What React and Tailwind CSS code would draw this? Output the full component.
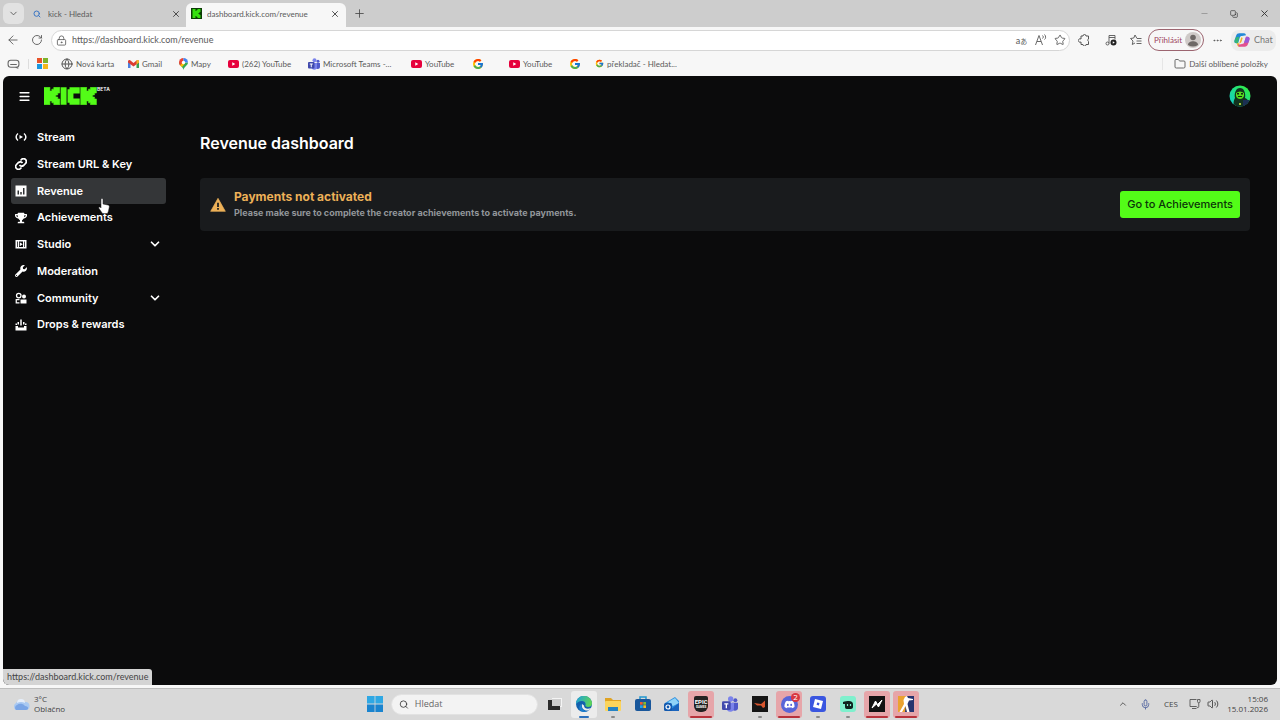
import React from "react";
import {
  ChevronDown, ChevronUp, X, Plus, Minus, ArrowLeft, RotateCw, Star, Ellipsis,
  Globe, Folder, Search, Menu, Mic, Volume2, LockKeyhole, Copy,
} from "lucide-react";
import { FcGoogle } from "react-icons/fc";
import { FaTrophy, FaWrench, FaDiscord } from "react-icons/fa";

const K_PATH = "M0 0H3V2H4V1H5V0H8V3H7V4H6V5H7V6H8V9H5V8H4V7H3V9H0Z";

function KickLogo() {
  return (
    <svg viewBox="0 0 27 9" className="h-[18px] w-[53px]" role="img" aria-label="Kick" fill="#53fc18">
      <path d={K_PATH} stroke="#53fc18" strokeWidth="0.300" />
      <path d="M8.500 0H11.500V9H8.500Z" />
      <path d="M13 0H18.200V3.200H15V5.800H18.200V9H13V8H12V1H13Z" />
      <path d={K_PATH} transform="translate(18.700 0)" stroke="#53fc18" strokeWidth="0.300" />
    </svg>
  );
}

function KickFavicon() {
  return (
    <svg viewBox="0 0 11 11" className="h-[11px] w-[11px] shrink-0" aria-hidden="true">
      <rect width="11" height="11" fill="#0b3d05" />
      <path d={K_PATH} transform="translate(1.5 1)" fill="#35e00f" />
    </svg>
  );
}

function YouTubeIcon() {
  return (
    <svg viewBox="0 0 22 16" className="h-2 w-[11px] shrink-0" aria-hidden="true">
      <rect width="22" height="16" rx="4" fill="#e6003c" />
      <path d="M8.5 4.5l6 3.5-6 3.5z" fill="#fff" />
    </svg>
  );
}

function MicrosoftIcon() {
  return (
    <svg viewBox="0 0 11 11" className="h-[11px] w-[11px] shrink-0" aria-hidden="true">
      <rect width="5" height="5" fill="#e8532a" />
      <rect x="6" width="5" height="5" fill="#7db32a" />
      <rect y="6" width="5" height="5" fill="#1a98e0" />
      <rect x="6" y="6" width="5" height="5" fill="#f5b61c" />
    </svg>
  );
}

function GmailIcon() {
  return (
    <svg viewBox="0 0 22 16" className="h-2 w-[11px] shrink-0" aria-hidden="true">
      <path d="M0 3v13h5V7z" fill="#4a7fe0" />
      <path d="M22 3v13h-5V7z" fill="#35a352" />
      <path d="M0 3C0 0 3-1 5 1l6 5 6-5c2-2 5-1 5 2v2L11 13 0 5z" fill="#dc3d31" />
      <path d="M17 1c2-2 5-1 5 2v2l-5 4z" fill="#f5b928" />
    </svg>
  );
}

function MapsIcon() {
  return (
    <svg viewBox="0 0 18 24" className="h-3 w-[9px] shrink-0" aria-hidden="true">
      <path d="M9 24C8 17 0 15 0 9h18c0 6-8 8-9 15z" fill="#34a853" />
      <path d="M0 9a9 9 0 0 1 9-9v9L2 15C1 13 0 11 0 9z" fill="#ea4335" />
      <path d="M9 0a9 9 0 0 1 9 9H9z" fill="#4285f4" />
      <path d="M2 15l7-8 3 4-6 7z" fill="#fbbc04" />
      <circle cx="9" cy="9" r="3.4" fill="#fff" />
    </svg>
  );
}

function TeamsIcon({ className }) {
  return (
    <svg viewBox="0 0 24 24" className={className} aria-hidden="true">
      <circle cx="13" cy="4.500" r="4" fill="#7b83eb" />
      <circle cx="20" cy="6.500" r="3" fill="#5059c9" />
      <path d="M15 10h9v7a4.500 4.500 0 0 1-9 1z" fill="#5059c9" />
      <path d="M7 10h11v8a5.500 5.500 0 0 1-11 0z" fill="#7b83eb" />
      <rect y="8" width="13" height="13" rx="2" fill="#4049ad" />
      <path d="M3.500 11h6v1.800H7.500v5.500h-2v-5.500h-2z" fill="#fff" />
    </svg>
  );
}

function SidebarPillIcon() {
  return (
    <svg viewBox="0 0 24 18" className="h-[10px] w-[13px]" fill="none" stroke="#666" strokeWidth="2" aria-hidden="true">
      <rect x="2" y="2" width="20" height="13" rx="5" />
      <path d="M6 10h12M16 15l5 2" />
    </svg>
  );
}

function FavoritesIcon() {
  return (
    <svg viewBox="0 0 24 24" className="h-3 w-3" fill="none" stroke="#555" strokeWidth="1.800" strokeLinejoin="round" aria-hidden="true">
      <path d="M14 9L10 2 7.500 8 1 9l5 5-1.500 7L10 18" />
      <path d="M14 9h9M13 14h10M13 19h10" />
    </svg>
  );
}

function MediaIcon() {
  return (
    <svg viewBox="0 0 24 24" className="h-3 w-3" fill="none" stroke="#555" strokeWidth="1.800" aria-hidden="true">
      <path d="M8 19V3h12v8M8 7h12" />
      <circle cx="5" cy="19" r="3" />
      <circle cx="17" cy="17" r="6" fill="#222" stroke="none" />
      <path d="M15.500 14.500l4 2.500-4 2.500z" fill="#fff" stroke="none" />
    </svg>
  );
}

function ExtensionsIcon() {
  return (
    <svg viewBox="0 0 24 24" className="h-3 w-3" fill="none" stroke="#555" strokeWidth="2" strokeLinejoin="round" aria-hidden="true">
      <path d="M6 4h4a3 3 0 0 1 6 0h5v6a3 3 0 0 0 0 5v6h-5a3 3 0 0 1-6 0H6v-5a3.500 3.500 0 1 1 0-6z" />
    </svg>
  );
}

function NetworkIcon() {
  return (
    <svg viewBox="0 0 24 24" className="h-3 w-3" fill="none" stroke="#555" strokeWidth="1.800" aria-hidden="true">
      <path d="M15 3H2v14h13M6 21h9" />
      <path d="M17 3v4a2.500 2.500 0 0 0 5 0V3h-5zM19.500 10v7c0 3-4 3-4 0" />
    </svg>
  );
}

function CopilotIcon() {
  return (
    <svg viewBox="0 0 24 24" className="h-4 w-4" aria-hidden="true">
      <path d="M8 2h7c2 0 2.500 1 3 3l-6 1c-2 0-3 1-3.500 3L6 17H4c-3 0-4-2-3-5l2-6c1-3 2.500-4 5-4z" fill="#2188d8" />
      <path d="M3 8l5-1-2 10H4c-3 0-4-2-3-5z" fill="#35b47a" />
      <path d="M4 17h4c2 0 3-1 3.500-3L13 9l-2-1-3 9c-.5 2 0 4 2 5H7c-2 0-2-3-3-5z" fill="#f3b32a" />
      <path d="M16 22H9c-2 0-2.500-1-3-3l6-1c2 0 3-1 3.500-3L18 7h2c3 0 4 2 3 5l-2 6c-1 3-2.500 4-5 4z" fill="#e2508f" />
      <path d="M18 7h2c3 0 4 2 3 5l-1.500 4L15 16z" fill="#9a58d8" />
    </svg>
  );
}

function Avatar() {
  return (
    <svg viewBox="0 0 22 22" className="h-[22px] w-[22px]" aria-hidden="true">
      <defs>
        <linearGradient id="avatar-bg" x1="0" y1="1" x2="1" y2="0">
          <stop offset="0" stopColor="#12c8d8" />
          <stop offset="0.500" stopColor="#1fe08a" />
          <stop offset="1" stopColor="#39f02a" />
        </linearGradient>
        <clipPath id="avatar-clip"><circle cx="11" cy="11" r="10.500" /></clipPath>
      </defs>
      <g clipPath="url(#avatar-clip)">
        <rect width="22" height="22" fill="url(#avatar-bg)" />
        <path d="M5 22c-1-5 0-7 1-9C5 8 7 3 11 3s6 5 5 10c3 1 4 3 4 9z" fill="#12331f" />
        <path d="M7 8q4-3 8 0v3q-1 3-4 3t-4-3z" fill="#55d81c" />
        <rect x="8" y="8" width="2" height="1.500" fill="#0d2912" />
        <rect x="12" y="8" width="2" height="1.500" fill="#0d2912" />
        <path d="M9 11.500h4" stroke="#0d2912" />
        <path d="M14 15h6v6h-6z" fill="#1b2f52" />
        <rect x="10" y="18" width="2" height="2" fill="#a6c83a" />
      </g>
    </svg>
  );
}

const bookmarks = [
  { icon: <MicrosoftIcon />, label: "", name: "Microsoft", width: "w-6" },
  { icon: <Globe size={12} color="#555" className="shrink-0" />, label: "Nová karta", width: "w-[67px]" },
  { icon: <GmailIcon />, label: "Gmail", width: "w-[51px]" },
  { icon: <MapsIcon />, label: "Mapy", width: "w-[49px]" },
  { icon: <YouTubeIcon />, label: "(262) YouTube", width: "w-20" },
  { icon: <TeamsIcon className="h-3 w-3 shrink-0" />, label: "Microsoft Teams -...", width: "w-[103px]" },
  { icon: <YouTubeIcon />, label: "YouTube", width: "w-[61px]" },
  { icon: <FcGoogle size={12} className="shrink-0" />, label: "", name: "Google", width: "w-[37px]" },
  { icon: <YouTubeIcon />, label: "YouTube", width: "w-[60px]" },
  { icon: <FcGoogle size={12} className="shrink-0" />, label: "", name: "Google", width: "w-[26px]" },
  { icon: <FcGoogle size={9} className="shrink-0" />, label: "překladač - Hledat...", width: "w-[90px]" },
];

function BrowserChrome() {
  return (
    <header className="font-[Lato,'Open_Sans',sans-serif] text-[#5a5a5a]">
      <div className="flex h-[27px] items-stretch bg-[#cdcdcd]">
        <div className="flex w-[27px] items-center pl-[3px]">
          <button aria-label="Tab actions" className="flex h-[21px] w-[21px] items-center justify-center rounded-md bg-[#e2e2e2]">
            <ChevronDown size={11} />
          </button>
        </div>
        <div className="flex w-[159px] items-center pr-[5px] pl-[6px] text-[8px]">
          <Search size={8} color="#3b76c4" strokeWidth={3} />
          <span className="ml-[7px] flex-1 truncate">kick - Hledat</span>
          <button aria-label="Close tab kick - Hledat"><X size={10} color="#333" /></button>
        </div>
        <div className="mt-[3px] flex w-40 items-center rounded-t-md bg-[#f7f7f7] pr-[6px] pb-[3px] pl-[5px] text-[8px]">
          <KickFavicon />
          <span className="ml-[5px] flex-1 truncate">dashboard.kick.com/revenue</span>
          <button aria-label="Close tab dashboard.kick.com/revenue"><X size={10} color="#333" /></button>
        </div>
        <button aria-label="New tab" className="flex w-[27px] items-center justify-center"><Plus size={13} color="#444" strokeWidth={1.5} /></button>
        <div className="ml-auto flex items-center">
          <button aria-label="Minimize" className="flex w-[30px] justify-center"><Minus size={9} color="#777" strokeWidth={1.5} /></button>
          <button aria-label="Restore" className="flex w-[30px] justify-center"><Copy size={8} color="#333" className="-scale-x-100 rotate-90" /></button>
          <button aria-label="Close" className="flex w-[31px] justify-center"><X size={11} color="#333" /></button>
        </div>
      </div>

      <div className="flex h-[26px] items-center bg-[#f7f7f7]">
        <button aria-label="Back" className="flex w-[26px] justify-center"><ArrowLeft size={14} strokeWidth={1.5} /></button>
        <button aria-label="Reload" className="mr-[3px] flex w-[22px] justify-center"><RotateCw size={12} strokeWidth={1.8} /></button>
        <div className="flex h-[21px] flex-1 items-center rounded-full border border-[#d6d6d6] bg-white pr-0 pl-1">
          <LockKeyhole size={11} strokeWidth={1.8} />
          <input aria-label="Address" defaultValue="https://dashboard.kick.com/revenue" className="ml-[5px] min-w-0 flex-1 bg-transparent text-[9px] outline-none" />
          <button aria-label="Translate" className="flex w-[19px] items-baseline justify-center text-[9px] leading-none">a<span className="font-['Noto_Sans_CJK_JP',sans-serif] text-[7px]">あ</span></button>
          <button aria-label="Read aloud" className="flex w-[19px] items-center justify-center">
            <svg viewBox="0 0 24 24" className="h-3 w-3" fill="none" stroke="currentColor" strokeWidth="1.800" aria-hidden="true">
              <path d="M1 22L8 3l7 19M4 15h8M15 3c2 1 2 5 0 6M19 1c3 3 3 8 0 10" />
            </svg>
          </button>
          <button aria-label="Add to favourites" className="flex w-[19px] justify-center"><Star size={12} strokeWidth={1.8} /></button>
        </div>
        <button aria-label="Extensions" className="flex w-7 justify-center"><ExtensionsIcon /></button>
        <button aria-label="Media control" className="flex w-[25px] justify-center"><MediaIcon /></button>
        <button aria-label="Favourites" className="flex w-[25px] justify-center"><FavoritesIcon /></button>
        <button className="flex h-[22px] w-[56px] items-center justify-between rounded-full border border-[#9c6570] pr-[2px] pl-[5px] text-[8px] text-[#9d4560]">
          Přihlásit
          <svg viewBox="0 0 16 16" className="h-4 w-4" aria-hidden="true">
            <circle cx="8" cy="8" r="8" fill="#cfcac8" />
            <circle cx="8" cy="5.500" r="2.800" fill="#6d6866" />
            <path d="M3 13c0-5 10-5 10 0q-5 3-10 0z" fill="#6d6866" />
          </svg>
        </button>
        <button aria-label="Settings and more" className="flex w-[27px] justify-center"><Ellipsis size={11} /></button>
        <button className="mr-1 flex h-[21px] w-[45px] items-center gap-1 rounded-lg bg-[#ececec] pl-[3px] text-[9px] text-[#777]"><CopilotIcon />Chat</button>
      </div>

      <nav aria-label="Favourites bar" className="flex h-[23px] items-center bg-[#f7f7f7] pr-3 pb-[2px] pl-[7px] text-[8px]">
        <SidebarPillIcon />
        <span className="mr-2 ml-2 h-[10px] w-px bg-[#ddd]" />
        {bookmarks.map((b, i) => (
          <a key={i} href="#" aria-label={b.label || b.name} className={"flex items-center gap-[3px] whitespace-nowrap " + b.width}>
            {b.icon}
            {b.label}
          </a>
        ))}
        <a href="#" className="ml-auto flex items-center gap-[3px] border-l border-[#e6e6e6] pl-[11px]">
          <Folder size={12} strokeWidth={1.8} />
          Další oblíbené položky
        </a>
      </nav>
    </header>
  );
}

const iconClass = "h-3 w-3 shrink-0";

const navItems = [
  {
    label: "Stream",
    icon: (
      <svg viewBox="0 0 24 24" className={iconClass} fill="none" stroke="currentColor" strokeWidth="3" aria-hidden="true">
        <path d="M6 5C1 9 1 15 6 19M18 5c5 4 5 10 0 14" />
        <path d="M9 8l7 4-7 4z" fill="currentColor" stroke="none" />
      </svg>
    ),
  },
  {
    label: "Stream URL & Key",
    icon: (
      <svg viewBox="0 0 24 24" className={iconClass} fill="none" stroke="currentColor" strokeWidth="3.500" aria-hidden="true">
        <path d="M11 5l2-2a5.500 5.500 0 0 1 8 8l-4 4a5.500 5.500 0 0 1-8-1" />
        <path d="M13 19l-2 2a5.500 5.500 0 0 1-8-8l4-4a5.500 5.500 0 0 1 8 1" />
      </svg>
    ),
  },
  {
    label: "Revenue",
    active: true,
    icon: (
      <svg viewBox="0 0 24 24" className={iconClass} aria-hidden="true">
        <rect x="1" y="1" width="22" height="22" fill="#fff" />
        <path d="M5 11h3v8H5zM10.500 14h3v5h-3zM16 6h3v13h-3z" fill="#303234" />
      </svg>
    ),
  },
  { label: "Achievements", icon: <FaTrophy className={iconClass} /> },
  {
    label: "Studio",
    expandable: true,
    icon: (
      <svg viewBox="0 0 24 24" className={iconClass} aria-hidden="true">
        <rect x="1" y="4" width="22" height="17" fill="#fff" />
        <path d="M4 7h1.500v11H4zM18.500 7H20v11h-1.500zM8 7h8v11H8z" fill="#0b0b0c" />
        <path d="M9.500 8.500l6 4-6 4z" fill="#fff" />
      </svg>
    ),
  },
  { label: "Moderation", icon: <FaWrench className={iconClass} /> },
  {
    label: "Community",
    expandable: true,
    icon: (
      <svg viewBox="0 0 24 24" className={iconClass} fill="currentColor" aria-hidden="true">
        <circle cx="7.500" cy="7" r="4.500" fill="none" stroke="currentColor" strokeWidth="2.500" />
        <circle cx="18" cy="9" r="4" />
        <path d="M11 15h12v8H11z" />
        <path d="M9 15H2.500v6.500H9" fill="none" stroke="currentColor" strokeWidth="2.500" />
      </svg>
    ),
  },
  {
    label: "Drops & rewards",
    icon: (
      <svg viewBox="0 0 24 24" className={iconClass} fill="currentColor" aria-hidden="true">
        <path d="M1 14h5v3h12v-3h5v9H1zM10.500 1h3v12h-3zM5 6h3v5H5zM16 6h3v5h-3zM1 9h3v3H1zM20 9h3v3h-3z" />
      </svg>
    ),
  },
];

function HandCursor() {
  return (
    <svg viewBox="0 0 12 16" className="absolute top-5 left-[87px] z-10 h-4 w-3" aria-hidden="true">
      <path d="M3 1.500c0-1.500 2-1.500 2 0V6l5 1c1 .3 1.500 1 1.300 2L10.500 13 9.500 15.500H4.500L1 10.500c-.8-1.200.5-2.200 1.500-1.200L3 10z" fill="#fff" stroke="#222" strokeWidth="0.500" />
    </svg>
  );
}

function Dashboard() {
  return (
    <main className="relative mx-[3px] mb-[3px] flex flex-1 flex-col overflow-hidden rounded-md bg-[#0b0b0c] font-[Inter,sans-serif] text-white">
      <div className="flex h-10 items-center pr-[26px] pl-[15px]">
        <button aria-label="Toggle menu"><Menu size={13} strokeWidth={3} /></button>
        <a href="#" className="ml-[13px] flex items-start">
          <KickLogo />
          <span className="text-[5px] leading-[4px] font-semibold">BETA</span>
        </a>
        <button aria-label="Account" className="ml-auto"><Avatar /></button>
      </div>

      <div className="flex flex-1">
        <nav aria-label="Dashboard" className="mt-2 ml-2 grid h-[214px] w-[155px] shrink-0 grid-rows-8">
          {navItems.map((item) => (
            <div key={item.label} className="relative flex">
              <a
                href="#"
                className={
                  "flex flex-1 items-center rounded-[3px] pr-1 pl-1 text-[11px] font-semibold " +
                  (item.active ? "bg-[#343638]" : "")
                }
              >
                {item.icon}
                <span className="ml-[10px]">{item.label}</span>
                {item.expandable && <ChevronDown size={14} strokeWidth={3} className="ml-auto" />}
              </a>
              {item.active && <HandCursor />}
            </div>
          ))}
        </nav>

        <div className="mr-[27px] ml-[34px] flex-1">
          <h1 className="mt-[15px] text-[16px] leading-6 font-semibold">Revenue dashboard</h1>
          <section className="mt-[23px] flex h-[53px] items-center rounded-sm bg-[#191b1d] pr-[10px] pl-[10px]">
            <svg viewBox="0 0 24 24" className="h-4 w-4" aria-hidden="true">
              <path d="M12 2L23 21.500H1z" fill="#edb158" stroke="#edb158" strokeLinejoin="round" />
              <path d="M10.700 8.500h2.600v6.500h-2.600zM10.700 16.500h2.600v2.600h-2.600z" fill="#191b1d" />
            </svg>
            <div className="ml-2">
              <h2 className="text-[12px] leading-4 font-bold text-[#edb158]">Payments not activated</h2>
              <p className="text-[9px] leading-4 font-bold text-[#92969a]">
                Please make sure to complete the creator achievements to activate payments.
              </p>
            </div>
            <button className="ml-auto h-[27px] rounded-[3px] bg-[#53fc18] px-[7px] text-[11px] font-medium text-[#0b3508]">
              Go to Achievements
            </button>
          </section>
        </div>
      </div>

      <div className="absolute bottom-0 left-0 h-4 rounded-tr-[3px] bg-[#d4d4d4] px-1 font-[Lato,sans-serif] text-[9px] leading-4 text-[#444]">
        https://dashboard.kick.com/revenue
      </div>
    </main>
  );
}

const taskIcon = "h-4 w-4";

const apps = [
  {
    name: "Task view",
    icon: (
      <svg viewBox="0 0 16 16" className={taskIcon}>
        <rect x="5" y="2" width="10" height="9" fill="#f4f4f4" />
        <rect x="1" y="4" width="12" height="10" fill="#2c2c2c" />
        <rect x="5" y="3" width="9" height="7" fill="#cfcfcf" />
      </svg>
    ),
  },
  {
    name: "Edge",
    cell: "bg-[#ececec]",
    bar: "w-[10px] bg-[#2a6fbd]",
    icon: (
      <svg viewBox="0 0 16 16" className={taskIcon}>
        <defs>
          <linearGradient id="edge-top" x1="0" y1="0" x2="1" y2="0.300">
            <stop offset="0" stopColor="#1b9de0" />
            <stop offset="1" stopColor="#5bd35a" />
          </linearGradient>
        </defs>
        <circle cx="8" cy="8" r="8" fill="#1360ad" />
        <path d="M0 8a8 8 0 0 1 16-.5c0 2.500-2 3.500-4 3.500s-3-.8-2.500-2C10 6 8 5 6 5 3 5 1 6.500 0 8z" fill="url(#edge-top)" />
        <path d="M6 8c-1 4 2 7 6 6.500 1.500-.3 2.500-1.500 3-2.500-3 1.500-7 1-7-2.500z" fill="#ececec" />
        <path d="M5.500 8c-.5 4 2 7.500 6 7.300-2 1-5 .7-6-.3C2 13.500 3 9 5.500 8z" fill="#1b7fd0" />
      </svg>
    ),
  },
  {
    name: "File Explorer",
    bar: "w-1 bg-[#8a8a8a]",
    icon: (
      <svg viewBox="0 0 16 16" className={taskIcon}>
        <path d="M0 2h6l2 2h8v10H0z" fill="#e0a323" />
        <rect y="5" width="16" height="10" rx="1" fill="#fbd45c" />
        <path d="M3 11h10v4H3z" fill="#2483c5" />
      </svg>
    ),
  },
  {
    name: "Microsoft Store",
    icon: (
      <svg viewBox="0 0 16 16" className={taskIcon}>
        <path d="M5 4V1h6v3" fill="none" stroke="#2197cf" strokeWidth="1.500" />
        <rect y="3" width="16" height="12" rx="2" fill="#19579b" />
        <path d="M5 6h2.700v2.700H5z" fill="#ee5b30" /><path d="M8.300 6H11v2.700H8.300z" fill="#83ba2f" />
        <path d="M5 9.300h2.700V12H5z" fill="#20a5ea" /><path d="M8.300 9.300H11V12H8.300z" fill="#f9b91f" />
      </svg>
    ),
  },
  {
    name: "Outlook",
    icon: (
      <svg viewBox="0 0 16 16" className={taskIcon}>
        <path d="M1 7l10-6 4 4v9H3z" fill="#2b8fe0" />
        <path d="M4 6l7-4 4 5-6 3z" fill="#8fd3f7" />
        <path d="M6 14l9-7v8H6z" fill="#1a64bd" />
        <rect y="7" width="8" height="8" rx="1.500" fill="#1259ae" />
        <circle cx="4" cy="11" r="2" fill="none" stroke="#fff" strokeWidth="1.200" />
      </svg>
    ),
  },
  {
    name: "Epic Games",
    cell: "bg-[#e6a5a9]",
    bar: "w-[22px] bg-[#b8323b]",
    icon: (
      <span className="flex h-4 w-[14px] flex-col items-center rounded-[2px] rounded-b-md bg-[#222] pt-[2px] font-['Roboto',sans-serif] leading-none font-bold text-white">
        <span className="text-[6px] leading-[7px]">EPIC</span>
        <span className="text-[3px] leading-[4px]">GAMES</span>
      </span>
    ),
  },
  { name: "Teams", icon: <TeamsIcon className={taskIcon} /> },
  {
    name: "Launcher",
    bar: "w-1 bg-[#8a8a8a]",
    icon: (
      <svg viewBox="0 0 16 16" className={taskIcon}>
        <rect width="16" height="16" fill="#151515" />
        <path d="M2 7l7 1 4-3.500V11l-2 1-2-2.500H5z" fill="#d8552e" />
      </svg>
    ),
  },
  {
    name: "Discord",
    cell: "bg-[#e6a5a9]",
    bar: "w-[22px] bg-[#b8323b]",
    badge: "2",
    icon: (
      <span className="flex h-[17px] w-[17px] items-center justify-center rounded-full bg-[#5865d8] text-white"><FaDiscord size={11} /></span>
    ),
  },
  {
    name: "Roblox",
    bar: "w-1 bg-[#8a8a8a]",
    icon: (
      <svg viewBox="0 0 16 16" className={taskIcon}>
        <rect width="16" height="16" rx="3" fill="#3a56e0" />
        <path d="M5 3l8 2-2 8-8-2z" fill="#fff" />
        <path d="M7.200 6.500l2.300.6-.6 2.300-2.300-.6z" fill="#3a56e0" />
      </svg>
    ),
  },
  {
    name: "Streamlabs",
    bar: "w-1 bg-[#8a8a8a]",
    icon: (
      <svg viewBox="0 0 16 16" className={taskIcon}>
        <rect width="16" height="16" rx="3" fill="#7ff0cd" />
        <path d="M3 6c2-1 4-1 6-1s4 1 4 3v3c0 1-1 2-2 2H7c-2 0-2-1-2-3V8H3z" fill="#10241f" />
        <path d="M7.500 8v2M10.500 8v2" stroke="#7ff0cd" strokeWidth="1.200" />
      </svg>
    ),
  },
  {
    name: "Editor",
    cell: "bg-[#e6a5a9]",
    bar: "w-[22px] bg-[#b8323b]",
    icon: (
      <svg viewBox="0 0 16 16" className={taskIcon}>
        <rect width="16" height="16" fill="#111" />
        <path d="M3 12L6.500 5l2 3.500L13 4 9.500 11l-2-3z" fill="#fff" stroke="#fff" strokeLinejoin="round" />
      </svg>
    ),
  },
  {
    name: "Counter-Strike 2",
    cell: "bg-[#e6a5a9]",
    bar: "w-[22px] bg-[#b8323b]",
    icon: (
      <svg viewBox="0 0 16 16" className={taskIcon}>
        <rect width="16" height="16" fill="#eba330" />
        <path d="M9 0h7v16H7z" fill="#26336e" />
        <path d="M7 1l2-1 1 2 5 1v1l-4 .5L9.500 8l2 8H9L7.500 10 4 16H1.500L6 8 5.500 4z" fill="#fff" />
      </svg>
    ),
  },
];

function Taskbar() {
  return (
    <footer className="grid h-8 grid-cols-[1fr_auto_1fr] items-center border-t border-[#bdbdbd] bg-[#d9d9d9] pb-px font-['Open_Sans','Noto_Sans',sans-serif] text-[8px] text-[#444]">
      <button className="flex items-center gap-1 pl-3 text-left leading-[10px]">
        <svg viewBox="0 0 18 12" className="h-3 w-[18px]" aria-hidden="true">
          <path d="M4 12a4 4 0 0 1 0-7 5 5 0 0 1 9-1 4 4 0 0 1 1 8z" fill="#a9c9f2" />
          <path d="M4 12a3 3 0 0 1 1-5 5 4 0 0 1 8 1c4 0 4 4 1 4z" fill="#7aa5e6" />
          <path d="M5 5a4 4 0 0 1 8 0q-4-2-8 0z" fill="#e6eefa" />
        </svg>
        <span>3°C<br />Oblačno</span>
      </button>

      <div className="flex items-center gap-[2px] pl-[2px]">
        <button aria-label="Start" className="flex w-7 justify-center">
          <svg viewBox="0 0 16 16" className={taskIcon} aria-hidden="true">
            <path d="M0 0h7.600v7.600H0zM8.400 0H16v7.600H8.400z" fill="#2fa8e4" />
            <path d="M0 8.400h7.600V16H0zM8.400 8.400H16V16H8.400z" fill="#1a84cf" />
          </svg>
        </button>
        <label className="flex h-[21px] w-[147px] items-center rounded-full border border-[#e2e2e2] bg-[#f3f3f3] pl-[7px]">
          <Search size={11} color="#333" />
          <input aria-label="Hledat" placeholder="Hledat" className="ml-[6px] w-full min-w-0 bg-transparent text-[9px] outline-none placeholder:text-[#666]" />
        </label>
        <div className="grid w-[381px] grid-cols-13 justify-items-center">
          {apps.map((app) => (
            <button key={app.name} aria-label={app.name} className={"relative flex h-[27px] w-[26px] items-center justify-center rounded-[3px] " + (app.cell || "")}>
              {app.icon}
              {app.bar && (
                <span className="absolute inset-x-0 bottom-0 flex justify-center">
                  <span className={"h-[2px] rounded-full " + app.bar} />
                </span>
              )}
              {app.badge && (
                <span className="absolute top-[2px] right-[2px] flex h-[9px] w-[9px] items-center justify-center rounded-full bg-[#d9373f] text-[8px] leading-none text-white">
                  {app.badge}
                </span>
              )}
            </button>
          ))}
        </div>
      </div>

      <div className="flex items-center justify-end pr-3">
        <button aria-label="Show hidden icons" className="flex w-5 justify-center"><ChevronUp size={10} /></button>
        <button aria-label="Microphone" className="flex w-6 justify-center"><Mic size={11} color="#5366a0" /></button>
        <span className="w-7 text-center">CES</span>
        <button aria-label="Network" className="flex w-5 justify-center"><NetworkIcon /></button>
        <button aria-label="Volume" className="flex w-4 justify-center"><Volume2 size={12} strokeWidth={1.8} /></button>
        <time className="w-[47px] text-right leading-[10px]">15:06<br />15.01.2026</time>
      </div>
    </footer>
  );
}

export default function App() {
  return (
    <div className="flex min-h-screen flex-col bg-[#f7f7f7]">
      <BrowserChrome />
      <Dashboard />
      <Taskbar />
    </div>
  );
}
